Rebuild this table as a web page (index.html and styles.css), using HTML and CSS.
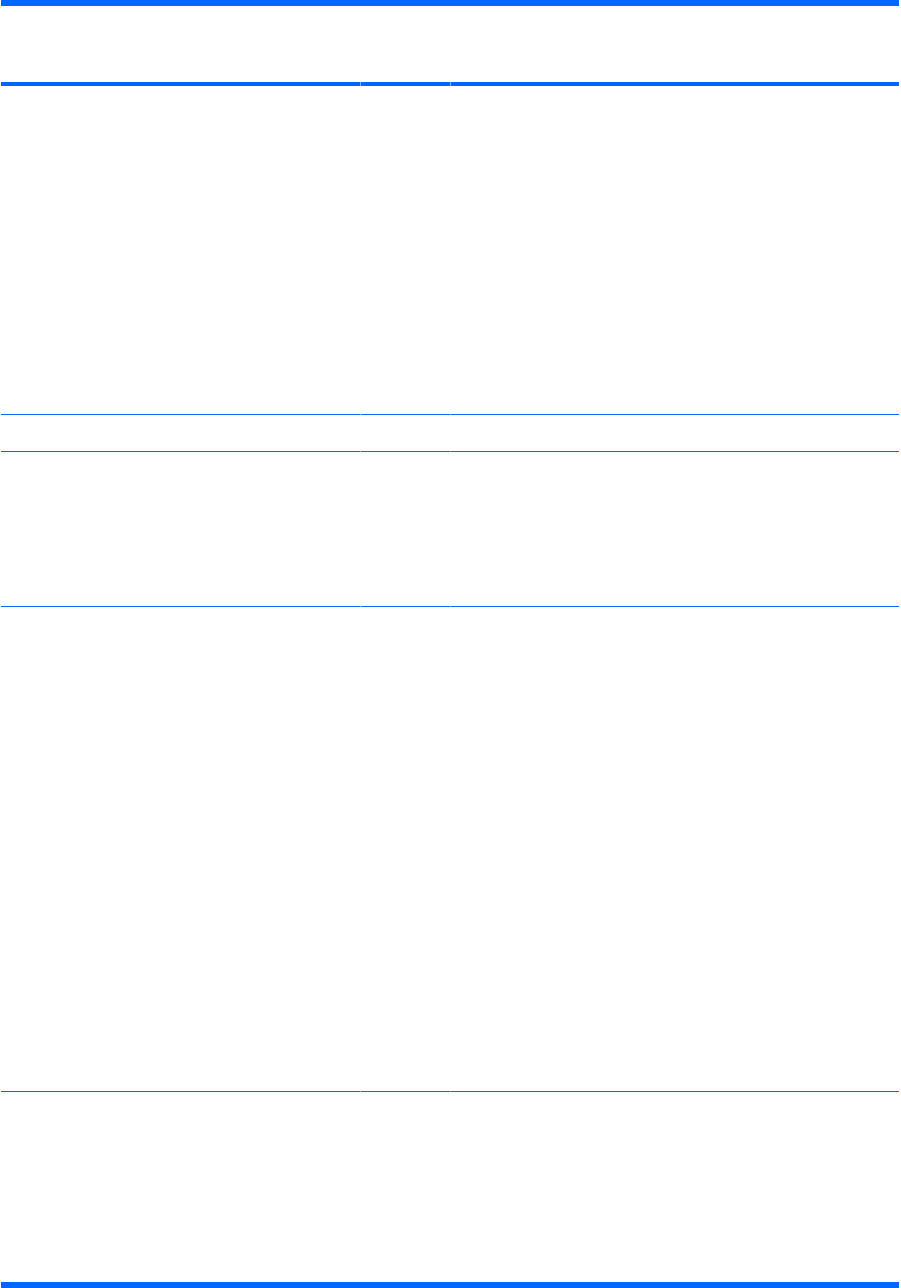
FILE: index.html
```html
<!DOCTYPE html>
<html lang="en">
<head>
    <meta charset="UTF-8">
    <title>Table</title>
    <link rel="stylesheet" href="styles.css">
</head>
<body>
    <div class="spec-table">
        <div class="row head">
            <div class="cell"></div>
            <div class="cell"></div>
            <div class="cell"></div>
        </div>
        <div class="row r1">
            <div class="cell"></div>
            <div class="cell"></div>
            <div class="cell"></div>
        </div>
        <div class="row r2">
            <div class="cell"></div>
            <div class="cell"></div>
            <div class="cell"></div>
        </div>
        <div class="row r3">
            <div class="cell"></div>
            <div class="cell"></div>
            <div class="cell"></div>
        </div>
        <div class="row r4">
            <div class="cell"></div>
            <div class="cell"></div>
            <div class="cell"></div>
        </div>
        <div class="row r5 last">
            <div class="cell"></div>
            <div class="cell"></div>
            <div class="cell"></div>
        </div>
    </div>
</body>
</html>
```

FILE: styles.css
```css
body {
    margin: 0;
    background-color: #fff;
    font-family: 'Liberation Sans', Arial, sans-serif;
}
.spec-table {
    margin: 0 2px 0 1px;
    border-top: 6px solid #0066ff;
    border-bottom: 6px solid #0066ff;
}
.row {
    display: grid;
    grid-template-columns: 359px 89px 1fr;
    column-gap: 1px;
    border-bottom: 1px solid #8ab4ff;
}
.row .cell {
    border-bottom: 1px solid #0066ff;
    margin-bottom: -1px;
}
.row.head {
    border-bottom-width: 4px;
}
.row.head .cell {
    border-bottom-width: 4px;
    margin-bottom: -4px;
}
.row.last {
    border-bottom: none;
}
.row.last .cell {
    border-bottom: none;
    margin-bottom: 0;
}
.head { height: 76px; }
.r1 { height: 328px; }
.r2 { height: 36px; }
.r3 { height: 154px; }
.r4 { height: 484px; }
.r5 { height: 190px; }
```
